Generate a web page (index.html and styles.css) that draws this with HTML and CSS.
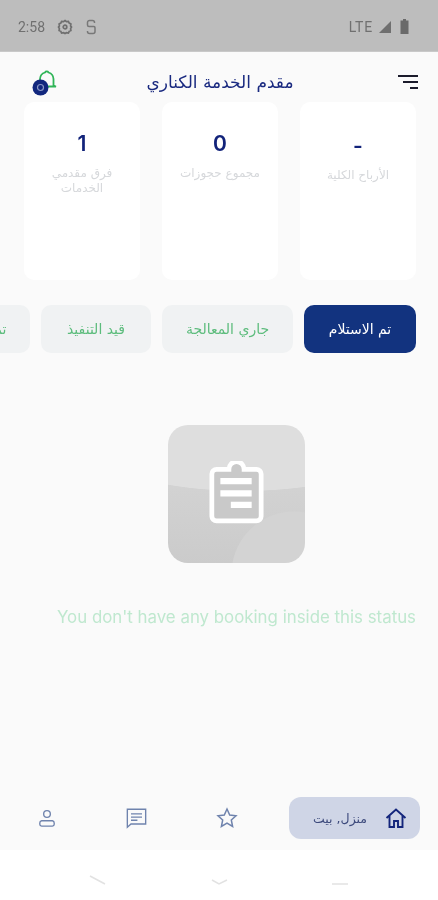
FILE: index.html
```html
<!DOCTYPE html>
<html lang="ar">
<head>
    <meta charset="UTF-8">
    <meta name="viewport" content="width=device-width, initial-scale=1.0">
    <title>مقدم الخدمة الكناري</title>
    <link rel="stylesheet" href="styles.css">
</head>
<body>
    <div class="status-bar">
        <div class="status-left">
            <span class="status-time">2:58</span>
            <svg class="status-icon" width="16" height="16" viewBox="0 0 16 16" fill="none" stroke="#6f6f6f" stroke-width="1.7">
                <path d="M8 1.5l1.5 1.2 1.9-.3.8 1.7 1.7.9-.3 1.9L14.500 8l-.9 1.600.3 1.900-1.700.800-.8 1.700-1.900-.3L8 14.500l-1.500-.8-1.900.3-.8-1.700-1.700-.8.3-1.900L1.500 8l.9-1.100-.3-1.900 1.700-.9.8-1.700 1.900.3z"/>
                <circle cx="8" cy="8" r="1.800"/>
            </svg>
            <svg class="status-icon" width="12" height="16" viewBox="0 0 12 16" fill="none" stroke="#787878" stroke-width="1.500">
                <path d="M9.500 4V3.500a2 2 0 0 0-2-2h-3a2 2 0 0 0-2 2V6a1.500 1.500 0 0 0 1.500 1.500h4A1.500 1.500 0 0 1 10 9v3.500a2 2 0 0 1-2 2H4.500a2 2 0 0 1-2-2V12"/>
            </svg>
        </div>
        <div class="status-right">
            <span class="status-lte">LTE</span>
            <svg width="14" height="14" viewBox="0 0 14 14"><path d="M13 1v12H1z" fill="#6f6f6f"/></svg>
            <svg class="status-battery" width="9" height="15" viewBox="0 0 9 15"><path d="M3 0h3v1.500h2.500V15H.5V1.500H3z" fill="#6a6a6a"/></svg>
        </div>
    </div>

    <div class="screen">
        <div class="header">
            <svg class="menu-icon" width="20" height="14" viewBox="0 0 20 14" fill="none" stroke="#1b1b2b" stroke-width="2">
                <path d="M0 1h20M5 7h15M12 13h8"/>
            </svg>
            <h1 class="title">مقدم الخدمة الكناري</h1>
            <svg class="bell-icon" width="26" height="30" viewBox="0 0 26 30" fill="none">
                <path d="M8 17V12a7 7 0 0 1 5-6.500a2 2 0 0 1 3.500 0a7 7 0 0 1 5 6.500v6.500l2.500 1H11" stroke="#2fb457" stroke-width="1.800"/>
                <circle cx="8.500" cy="20.500" r="8" fill="#12277e"/>
                <circle cx="8.500" cy="20.500" r="3" fill="none" stroke="#8b97c6" stroke-width="1.200"/>
            </svg>
        </div>

        <div class="cards">
            <div class="card">
                <div class="card-num card-dash">-</div>
                <div class="card-label">الأرباح الكلية</div>
            </div>
            <div class="card">
                <div class="card-num">0</div>
                <div class="card-label">مجموع حجوزات</div>
            </div>
            <div class="card">
                <div class="card-num">1</div>
                <div class="card-label">فرق مقدمي الخدمات</div>
            </div>
        </div>

        <div class="tabs">
            <div class="tab tab-active">تم الاستلام</div>
            <div class="tab tab-wide">جاري المعالجة</div>
            <div class="tab">قيد التنفيذ</div>
            <div class="tab tab-last">تم التسليم</div>
        </div>

        <div class="empty">
            <div class="empty-box">
                <svg width="55" height="63" viewBox="0 0 58 66" stroke="#fff">
                    <path d="M21 8.500h-13a5 5 0 0 0-5 5V58a5 5 0 0 0 5 5h42a5 5 0 0 0 5-5V13.500a5 5 0 0 0-5-5H37a8 8 0 0 0-16 0z" stroke-width="5" fill="#c9c9c9"/>
                    <path d="M12 21h33M12 34h33M23 46h22" stroke-width="6.500" fill="none"/>
                </svg>
            </div>
            <p class="empty-text">You don't have any booking inside this status</p>
        </div>

        <div class="bottom-nav">
            <div class="nav-active">
                <svg width="22" height="22" viewBox="0 0 22 22" fill="none" stroke="#14267c" stroke-width="1.900">
                    <path d="M1.500 11L11 2.500 20.500 11M4.500 9v11h4.500v-6h4v6h4.500V9"/>
                </svg>
                <span class="nav-label">منزل, بيت</span>
            </div>
            <svg class="nav-star" width="22" height="22" viewBox="0 0 22 22" fill="none" stroke="#6f83ad" stroke-width="1.500">
                <path d="M11 2l2.700 6 6.300.7-4.700 4.300 1.300 6.500L11 16.200 5.400 19.500 6.700 13 2 8.700 8.300 8z"/>
            </svg>
            <svg class="nav-chat" width="23" height="22" viewBox="0 0 24 24" fill="none" stroke="#6f83ad" stroke-width="1.500">
                <path d="M2 2.500h20v16H6l-4 3.500zM6 7.500h12M6 11h12M6 14.500h7"/>
            </svg>
            <svg class="nav-user" width="18" height="19" viewBox="0 0 20 20" fill="none" stroke="#6f83ad" stroke-width="1.500">
                <circle cx="10" cy="5" r="3.700"/>
                <path d="M4 12.500h12a2.500 2.500 0 0 1 2 2.500v1.500a2 2 0 0 1-2 2H4a2 2 0 0 1-2-2V15a2.500 2.500 0 0 1 2-2.500z"/>
            </svg>
        </div>
    </div>

    <div class="system-nav">
        <svg width="438" height="50" viewBox="0 0 438 50" fill="none" stroke="#e2e2e2" stroke-width="1.500">
            <path d="M90 26l15 8M212 30l7 4 8-4M332 34h16"/>
        </svg>
    </div>
</body>
</html>
```

FILE: styles.css
```css
* {
    box-sizing: border-box;
}
body {
    margin: 0;
    width: 438px;
    height: 900px;
    overflow: hidden;
    background: #fff;
    font-family: "DejaVu Sans", "Noto Sans", sans-serif;
    filter: blur(0.4px); /* reference is a soft, scaled-down capture */
}

/* status bar */
.status-bar {
    height: 52px;
    background: #bdbdbd;
    border-bottom: 1px solid #c9c9c9;
    padding: 2px 29px 0 18px;
    display: flex;
    align-items: center;
    justify-content: space-between;
}
.status-left, .status-right {
    display: flex;
    align-items: center;
}
.status-left {
    gap: 12px;
}
.status-right {
    gap: 5px;
}
.status-battery {
    margin-left: 3px;
}
.status-time, .status-lte {
    font-family: Roboto, sans-serif;
    font-size: 14px;
    color: #707070;
}
.status-lte {
    letter-spacing: 0.8px;
}

/* main screen */
.screen {
    height: 798px;
    background: #fafafa;
    overflow: hidden;
}
.header {
    height: 50px;
    display: flex;
    align-items: center;
    justify-content: space-between;
    direction: rtl;
    padding: 10px 20px 0 32px;
}
.title {
    margin: 0 16px 0 0;
    font-size: 17px;
    font-weight: normal;
    color: #1a2a80;
}

.cards {
    direction: rtl;
    display: flex;
    gap: 22px;
    padding-right: 22px;
    height: 178px;
}
.card {
    flex: 0 0 116px;
    background: #fff;
    border-radius: 10px;
    padding-top: 29px;
    text-align: center;
}
.card-num {
    font-family: Inter, sans-serif;
    font-size: 21px;
    font-weight: 600;
    line-height: 26px;
    color: #12237a;
}
.card-dash {
    padding-top: 2px;
}
.card-label {
    margin-top: 9px;
    padding: 0 12px;
    font-size: 12px;
    line-height: 15px;
    color: #d6d8db;
}

.tabs {
    direction: rtl;
    display: flex;
    gap: 11px;
    margin-top: 25px;
    padding-right: 22px;
    height: 48px;
}
.tab {
    flex: 0 0 110px;
    display: flex;
    align-items: center;
    justify-content: center;
    background: #f0f2f3;
    border-radius: 10px;
    font-size: 14px;
    color: #5cbc7c;
}
.tab-wide {
    flex-basis: 131px;
}
.tab-last {
    flex-basis: 108px;
}
.tab-active {
    flex-basis: 112px;
    background: #12337f;
    color: #fff;
}

/* empty state */
.empty {
    margin-top: 72px;
    height: 372px;
}
.empty-box {
    width: 137px;
    height: 138px;
    margin-left: 168px;
    padding-bottom: 4px;
    border-radius: 20px;
    background:
        radial-gradient(circle at 92% 108%, #d3d3d3 0 62px, transparent 63px),
        radial-gradient(ellipse 130% 48% at 55% 0, #dedede 0 99%, transparent 100%),
        linear-gradient(180deg, #d8d8d8, #cbcbcb);
    display: flex;
    align-items: center;
    justify-content: center;
}
.empty-text {
    margin: 44px 22px 0 0;
    text-align: right;
    white-space: nowrap;
    font-family: Inter, sans-serif;
    font-size: 16.850px;
    line-height: 20px;
    color: #bfe8cf;
}

/* bottom nav */
.bottom-nav {
    height: 42px;
    display: flex;
    align-items: center;
    direction: rtl;
    padding-right: 18px;
}
.nav-active {
    width: 131px;
    height: 42px;
    background: #cfd5e6;
    border-radius: 12px;
    display: flex;
    align-items: center;
    gap: 18px;
    padding-right: 13px;
}
.nav-label {
    font-size: 12.500px;
    color: #3d4a7c;
}
.nav-star {
    margin-right: 51px;
}
.nav-chat {
    margin-right: 68px;
}
.nav-user {
    margin-right: 69px;
}

.system-nav {
    height: 50px;
    background: #fff;
}
```
